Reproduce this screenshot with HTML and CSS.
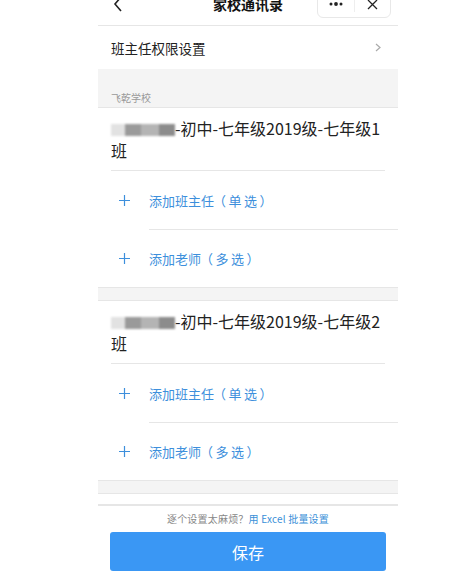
FILE: index.html
```html
<!DOCTYPE html>
<html lang="zh-CN">
<head>
    <meta charset="UTF-8">
    <meta name="viewport" content="width=device-width, initial-scale=1.0">
    <title>家校通讯录</title>
    <link rel="stylesheet" href="styles.css">
</head>
<body>
    <div class="screen">
        <header class="nav">
            <span class="nav-back">
                <svg width="10" height="16" viewBox="0 0 10 16"><polyline points="8,1 2,8 8,15" fill="none" stroke="#222" stroke-width="1.6"/></svg>
            </span>
            <span class="nav-title">家校通讯录</span>
            <div class="capsule">
                <span class="capsule-more">
                    <svg width="14" height="4" viewBox="0 0 14 4"><circle cx="2" cy="2" r="1.5" fill="#222"/><circle cx="7" cy="2" r="1.9" fill="#222"/><circle cx="12" cy="2" r="1.5" fill="#222"/></svg>
                </span>
                <span class="capsule-line"></span>
                <span class="capsule-close">
                    <svg width="11" height="11" viewBox="0 0 11 11"><path d="M1 1 L10 10 M10 1 L1 10" stroke="#222" stroke-width="1.3"/></svg>
                </span>
            </div>
        </header>

        <div class="menu-row">
            <span>班主任权限设置</span>
            <svg class="chevron" width="6" height="9" viewBox="0 0 6 9"><polyline points="1,1 5,4.5 1,8" fill="none" stroke="#aaa" stroke-width="1.2"/></svg>
        </div>

        <div class="section-label">飞乾学校</div>

        <div class="class-card">
            <div class="class-title"><span class="blur-name"><i class="b1"></i><i class="b2"></i><i class="b3"></i><i class="b4"></i></span>-初中-七年级2019级-七年级1班</div>
            <div class="add-row first"><span class="plus"><svg width="11" height="11" viewBox="0 0 11 11"><path d="M5.5 0 V11 M0 5.5 H11" stroke="#3d8fdc" stroke-width="1.2"/></svg></span>添加班主任<span class="note">（单选）</span></div>
            <div class="add-row"><span class="plus"><svg width="11" height="11" viewBox="0 0 11 11"><path d="M5.5 0 V11 M0 5.5 H11" stroke="#3d8fdc" stroke-width="1.2"/></svg></span>添加老师<span class="note">（多选）</span></div>
        </div>

        <div class="class-card">
            <div class="class-title"><span class="blur-name"><i class="b1"></i><i class="b2"></i><i class="b3"></i><i class="b4"></i></span>-初中-七年级2019级-七年级2班</div>
            <div class="add-row first"><span class="plus"><svg width="11" height="11" viewBox="0 0 11 11"><path d="M5.5 0 V11 M0 5.5 H11" stroke="#3d8fdc" stroke-width="1.2"/></svg></span>添加班主任<span class="note">（单选）</span></div>
            <div class="add-row"><span class="plus"><svg width="11" height="11" viewBox="0 0 11 11"><path d="M5.5 0 V11 M0 5.5 H11" stroke="#3d8fdc" stroke-width="1.2"/></svg></span>添加老师<span class="note">（多选）</span></div>
        </div>

        <div class="class-card peek"></div>

        <footer class="footer">
            <p class="hint">逐个设置太麻烦？<a href="#">用 Excel 批量设置</a></p>
            <button class="save-btn">保存</button>
        </footer>
    </div>
</body>
</html>
```

FILE: styles.css
```css
body {
    margin: 0;
    background-color: #fff;
    font-family: "Noto Sans CJK SC", "Noto Sans", sans-serif;
    color: #222;
    overflow: hidden;
    text-spacing-trim: space-all;
}

.screen {
    width: 300px;
    margin-left: 98px;
    background: #f4f4f4;
}

.nav {
    height: 42px;
    margin-top: -17px;
    background: #fff;
    border-bottom: 1px solid #e6e6e6;
    display: flex;
    align-items: center;
    position: relative;
}

.nav-back {
    margin-left: 15px;
    display: flex;
}

.nav-title {
    position: absolute;
    left: 0;
    right: 0;
    text-align: center;
    font-size: 14px;
    font-weight: bold;
    color: #111;
    pointer-events: none;
}

.capsule {
    margin-left: auto;
    margin-right: 7px;
    width: 72px;
    height: 25px;
    border: 1px solid #e8e8e8;
    border-radius: 6px;
    display: flex;
    align-items: center;
}

.capsule-more {
    width: 36px;
    display: flex;
    justify-content: center;
}

.capsule-line {
    width: 1px;
    height: 16px;
    background: #eee;
}

.capsule-close {
    flex: 1;
    display: flex;
    justify-content: center;
}

.menu-row {
    height: 43px;
    background: #fff;
    padding: 0 17px 0 13px;
    display: flex;
    align-items: center;
    justify-content: space-between;
    font-size: 13.5px;
    color: #222;
}

.section-label {
    height: 39px;
    box-sizing: border-box;
    padding: 21px 0 0 13px;
    font-size: 10px;
    color: #999;
    border-bottom: 1px solid #e6e6e6;
}

.class-card {
    background: #fff;
    border-bottom: 1px solid #e6e6e6;
    margin-bottom: 12px;
}

.class-card + .class-card {
    border-top: 1px solid #e6e6e6;
}

.class-title {
    margin: 0 13px;
    padding: 9px 0;
    font-size: 16px;
    line-height: 22px;
    color: #222;
    border-bottom: 1px solid #e6e6e6;
}

.blur-name {
    display: inline-block;
    width: 64px;
    height: 14px;
    vertical-align: -1px;
    filter: blur(1.2px);
}

.blur-name i {
    display: inline-block;
    height: 12px;
    margin-top: 1px;
}

.blur-name .b1 { width: 14px; background: #e2e2e2; }
.blur-name .b2 { width: 16px; background: #9a9a9a; }
.blur-name .b3 { width: 18px; background: #b4b4b4; }
.blur-name .b4 { width: 16px; background: #8c8c8c; }

.add-row {
    height: 57px;
    display: flex;
    align-items: center;
    font-size: 13px;
    color: #3d8fdc;
}

.add-row.first {
    height: 59px;
    box-sizing: border-box;
    border-bottom: 1px solid #e6e6e6;
    margin-left: 51px;
}

.add-row.first .plus {
    margin-left: -51px;
}

.note {
    letter-spacing: 2.5px;
    margin-left: -1px;
}

.plus {
    width: 51px;
    display: flex;
    justify-content: center;
    padding-left: 2px;
    box-sizing: border-box;
}

.peek {
    height: 10px;
    margin-bottom: 0;
}

.footer {
    background: #fff;
    border-top: 1px solid #e6e6e6;
    padding: 5px 12px 6px;
    text-align: center;
}

.hint {
    margin: 0 0 6px;
    font-size: 10px;
    line-height: 15px;
    letter-spacing: 0.2px;
    color: #888;
}

.hint a {
    color: #3a8fd8;
    text-decoration: none;
}

.save-btn {
    width: 100%;
    height: 39px;
    border: none;
    border-radius: 3px;
    background-color: #3a97f4;
    color: #fff;
    font-family: inherit;
    font-size: 16px;
    cursor: pointer;
}
```
